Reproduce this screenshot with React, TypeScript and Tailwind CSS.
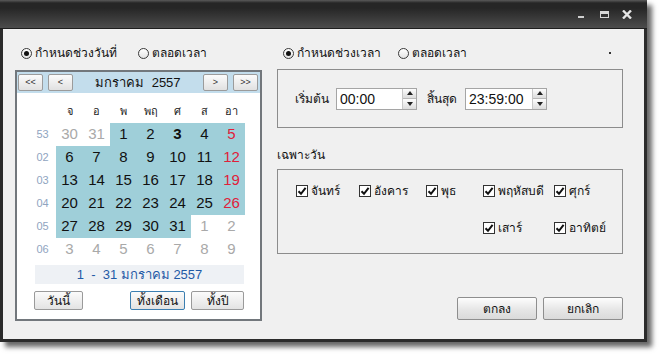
import React from "react";

function Radio({ checked }: { checked?: boolean }) {
  return (
    <span className="w-[11px] h-[11px] shrink-0 rounded-full border border-[#3a3a3a] bg-[linear-gradient(#ffffff,#e4e4e4)] flex items-center justify-center">
      {checked && <span className="w-[5px] h-[5px] rounded-full bg-[#111]" />}
    </span>
  );
}

function Check() {
  return (
    <span className="w-[12px] h-[12px] shrink-0 border border-[#333] bg-white flex items-center justify-center">
      <svg width="10" height="10" viewBox="0 0 10 10">
        <path d="M1.5 5.2 L4 7.8 L8.6 1.8" fill="none" stroke="#111" strokeWidth="2" />
      </svg>
    </span>
  );
}

function Spin() {
  return (
    <div className="w-[14px] h-full flex flex-col border-l border-[#c8c8c8]">
      <div className="flex-1 bg-[linear-gradient(#fdfdfd,#dcdcdc)] border-b border-[#b8b8b8] flex items-center justify-center">
        <svg width="6" height="4" viewBox="0 0 6 4"><path d="M0 4 L3 0 L6 4Z" fill="#222" /></svg>
      </div>
      <div className="flex-1 bg-[linear-gradient(#fdfdfd,#dcdcdc)] flex items-center justify-center">
        <svg width="6" height="4" viewBox="0 0 6 4"><path d="M0 0 L6 0 L3 4Z" fill="#222" /></svg>
      </div>
    </div>
  );
}

function NavBtn({ label }: { label: string }) {
  return (
    <div className="w-[25px] h-[17px] border border-[#9b9b9b] rounded-[2px] bg-[linear-gradient(#fbfbfb,#e1e1e1)] flex items-center justify-center text-[9px] leading-none text-[#333]">
      {label}
    </div>
  );
}

function SmallBtn({ label, w, focus }: { label: string; w: string; focus?: boolean }) {
  return (
    <div
      className={
        "h-[19px] rounded-[2px] flex items-center justify-center text-[12px] leading-none text-[#111] bg-[linear-gradient(#fbfbfb,#e3e3e3)] border " +
        (focus ? "border-[#3c7fb1] " : "border-[#9a9a9a] ") +
        w
      }
    >
      {label}
    </div>
  );
}

type Cell = { d: number; kind: "in" | "out"; hl: boolean; sun?: boolean; bold?: boolean };

const rows: { wk: string; cells: Cell[] }[] = [
  {
    wk: "53",
    cells: [
      { d: 30, kind: "out", hl: false },
      { d: 31, kind: "out", hl: false },
      { d: 1, kind: "in", hl: true },
      { d: 2, kind: "in", hl: true },
      { d: 3, kind: "in", hl: true, bold: true },
      { d: 4, kind: "in", hl: true },
      { d: 5, kind: "in", hl: true, sun: true },
    ],
  },
  { wk: "02", cells: [6, 7, 8, 9, 10, 11, 12].map((d, i) => ({ d, kind: "in", hl: true, sun: i === 6 })) },
  { wk: "03", cells: [13, 14, 15, 16, 17, 18, 19].map((d, i) => ({ d, kind: "in", hl: true, sun: i === 6 })) },
  { wk: "04", cells: [20, 21, 22, 23, 24, 25, 26].map((d, i) => ({ d, kind: "in", hl: true, sun: i === 6 })) },
  {
    wk: "05",
    cells: [
      { d: 27, kind: "in", hl: true },
      { d: 28, kind: "in", hl: true },
      { d: 29, kind: "in", hl: true },
      { d: 30, kind: "in", hl: true },
      { d: 31, kind: "in", hl: true },
      { d: 1, kind: "out", hl: false },
      { d: 2, kind: "out", hl: false },
    ],
  },
  { wk: "06", cells: [3, 4, 5, 6, 7, 8, 9].map((d) => ({ d, kind: "out", hl: false })) },
];

const days = ["จ", "อ", "พ", "พฤ", "ศ", "ส", "อา"];

export default function App() {
  return (
    <div className="w-[662px] h-[356px] bg-white font-['Liberation_Sans',Tahoma,sans-serif] text-[#111] overflow-hidden">
      <div className="w-[647px] h-[342px] flex flex-col bg-[#2b2b2b] shadow-[5px_5px_5px_rgba(0,0,0,0.6)]">
        {/* title bar */}
        <div className="h-[29px] shrink-0 bg-[linear-gradient(to_bottom,#5a5a5a_0px,#262626_3px,#262626_8px,#4c4c4c_28px)] border-b border-[#1e1e1e] flex items-center justify-end pr-[9px]">
          <div className="w-[22px] h-[20px] flex items-center justify-center">
            <div className="w-[6px] h-[2px] bg-[#cfcfcf] mt-[5px]" />
          </div>
          <div className="w-[24px] h-[20px] flex items-center justify-center">
            <div className="w-[9px] h-[7px] border border-[#d8d8d8] border-t-[3px]" />
          </div>
          <div className="w-[22px] h-[20px] flex items-center justify-center">
            <svg width="10" height="9" viewBox="0 0 10 9">
              <path d="M1 0.5 L9 8.5 M9 0.5 L1 8.5" stroke="#e6e6e6" strokeWidth="2.4" />
            </svg>
          </div>
        </div>

        {/* body */}
        <div className="flex-1 mx-[3px] mb-[3px] bg-[#f0f0f0] flex pl-[12px] pt-[14px]">
          {/* left column */}
          <div className="w-[247px] flex flex-col">
            <div className="h-[20px] flex items-center pl-[6px] text-[12px]">
              <div className="w-[117px] flex items-center gap-[3px]">
                <Radio checked />
                <span>กำหนดช่วงวันที่</span>
              </div>
              <div className="flex items-center gap-[3px]">
                <Radio />
                <span>ตลอดเวลา</span>
              </div>
            </div>

            <div className="mt-[7px] h-[251px] border-2 border-[#72777c] bg-white flex flex-col">
              <div className="h-[21px] bg-[#c3ddec] flex items-center pl-[1px] pr-[2px]">
                <NavBtn label="<<" />
                <div className="ml-[5px]">
                  <NavBtn label="<" />
                </div>
                <div className="flex-1 text-center text-[13px] leading-none text-[#111]">มกราคม&nbsp;&nbsp;2557</div>
                <NavBtn label=">" />
                <div className="ml-[5px]">
                  <NavBtn label=">>" />
                </div>
              </div>

              <div className="mt-[7px] pl-[12px] grid grid-cols-[repeat(8,27px)] auto-rows-[23px]">
                <div />
                {days.map((d) => (
                  <div key={d} className="flex items-center justify-center text-[11px] text-[#222]">
                    {d}
                  </div>
                ))}
                {rows.map((r) => (
                  <React.Fragment key={r.wk}>
                    <div className="flex items-center justify-center text-[11px] text-[#90a4bf]">{r.wk}</div>
                    {r.cells.map((c, i) => (
                      <div
                        key={i}
                        className={
                          "flex items-center justify-center text-[15px] " +
                          (c.hl ? "bg-[#9fcfd9] " : "") +
                          (c.kind === "out" ? "text-[#a9a9a9] " : c.sun ? "text-[#e0203a] " : "text-[#111] ") +
                          (c.bold ? "font-bold" : "")
                        }
                      >
                        {c.d}
                      </div>
                    ))}
                  </React.Fragment>
                ))}
              </div>

              <div className="mt-[4px] ml-[18px] w-[209px] h-[19px] bg-[#eef1f5] flex items-center justify-center text-[13px] text-[#1f5aa6]">
                1&nbsp;&nbsp;-&nbsp;&nbsp;31 มกราคม 2557
              </div>

              <div className="mt-[7px] flex items-center">
                <div className="ml-[17px]">
                  <SmallBtn label="วันนี้" w="w-[49px]" />
                </div>
                <div className="ml-[47px]">
                  <SmallBtn label="ทั้งเดือน" w="w-[55px]" focus />
                </div>
                <div className="ml-[6px]">
                  <SmallBtn label="ทั้งปี" w="w-[53px]" />
                </div>
              </div>
            </div>
          </div>

          {/* right column */}
          <div className="ml-[15px] w-[346px] flex flex-col">
            <div className="h-[20px] flex items-center pl-[6px] text-[12px]">
              <div className="w-[115px] flex items-center gap-[3px]">
                <Radio checked />
                <span>กำหนดช่วงเวลา</span>
              </div>
              <div className="flex items-center gap-[3px]">
                <Radio />
                <span>ตลอดเวลา</span>
              </div>
              <span className="ml-auto mr-[12px] w-[2px] h-[2px] bg-[#333]" />
            </div>

            <div className="mt-[6px] h-[59px] border border-[#8c8c8c] flex items-center pl-[17px] text-[12px]">
              <span className="w-[41px]">เริ่มต้น</span>
              <div className="w-[81px] h-[22px] border border-[#a5a5a5] bg-white flex">
                <span className="flex-1 pl-[3px] leading-[20px] text-[14px]">00:00</span>
                <Spin />
              </div>
              <span className="ml-[10px] w-[38px]">สิ้นสุด</span>
              <div className="w-[82px] h-[22px] border border-[#a5a5a5] bg-white flex">
                <span className="flex-1 pl-[3px] leading-[20px] text-[14px]">23:59:00</span>
                <Spin />
              </div>
            </div>

            <div className="mt-[17px] h-[20px] flex items-center text-[12px]">เฉพาะวัน</div>

            <div className="mt-[4px] h-[85px] border border-[#8c8c8c] pt-[12px] pl-[18px]">
              <div className="grid grid-cols-[63px_67px_57px_71px_auto] auto-rows-[18px] gap-y-[19px] text-[12px]">
                <div className="flex items-center gap-[3px]"><Check /><span>จันทร์</span></div>
                <div className="flex items-center gap-[3px]"><Check /><span>อังคาร</span></div>
                <div className="flex items-center gap-[3px]"><Check /><span>พุธ</span></div>
                <div className="flex items-center gap-[3px]"><Check /><span>พฤหัสบดี</span></div>
                <div className="flex items-center gap-[3px]"><Check /><span>ศุกร์</span></div>
                <div className="col-start-4 flex items-center gap-[3px]"><Check /><span>เสาร์</span></div>
                <div className="flex items-center gap-[3px]"><Check /><span>อาทิตย์</span></div>
              </div>
            </div>

            <div className="mt-[43px] flex justify-end gap-[6px]">
              <div className="w-[80px] h-[23px] rounded-[2px] border border-[#8e8e8e] bg-[linear-gradient(#fdfdfd,#e6e6e6_55%,#dadada)] flex items-center justify-center text-[12px]">ตกลง</div>
              <div className="w-[80px] h-[23px] rounded-[2px] border border-[#8e8e8e] bg-[linear-gradient(#fdfdfd,#e6e6e6_55%,#dadada)] flex items-center justify-center text-[12px]">ยกเลิก</div>
            </div>
          </div>
        </div>
      </div>
    </div>
  );
}
